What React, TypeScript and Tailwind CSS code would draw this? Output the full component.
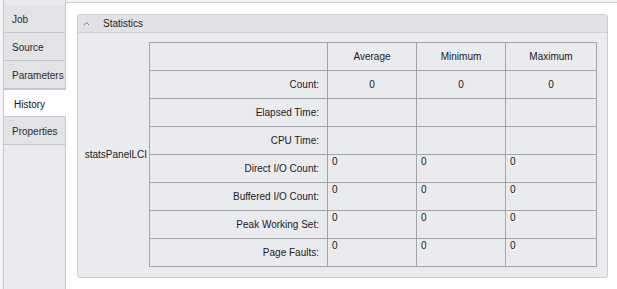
import React from "react";

const rows: { label: string; top: boolean; values: string[] }[] = [
  { label: "Count:", top: false, values: ["0", "0", "0"] },
  { label: "Elapsed Time:", top: false, values: ["", "", ""] },
  { label: "CPU Time:", top: false, values: ["", "", ""] },
  { label: "Direct I/O Count:", top: true, values: ["0", "0", "0"] },
  { label: "Buffered I/O Count:", top: true, values: ["0", "0", "0"] },
  { label: "Peak Working Set:", top: true, values: ["0", "0", "0"] },
  { label: "Page Faults:", top: true, values: ["0", "0", "0"] },
];

const tabs = ["Job", "Source", "Parameters", "History", "Properties"];

export default function App() {
  return (
    <div
      className="w-[617px] h-[289px] flex bg-[#f4f4f6] text-[#202020] overflow-hidden"
      style={{ fontFamily: '"Liberation Sans", Arial, sans-serif', fontSize: "10px" }}
    >
      {/* tab column */}
      <div className="w-[66px] h-full pl-[3px] flex">
        <div className="flex-1 h-full bg-[#eaebee] border-l border-r border-[#c6c7cb] flex flex-col pt-[5px]">
          {tabs.map((t) => {
            const sel = t === "History";
            return sel ? (
              <div
                key={t}
                className="relative z-10 -mr-px -ml-px h-[28px] bg-white border-t border-b border-l border-[#c6c7cb] flex items-center pl-[10px] pt-[2px] text-[#111]"
              >
                {t}
              </div>
            ) : (
              <div
                key={t}
                className="h-[28px] bg-[#e2e3e7] border-b border-[#c6c7cb] flex items-center pl-[8px] pt-[2px] text-[#2a2a2a]"
              >
                {t}
              </div>
            );
          })}
        </div>
      </div>

      {/* content */}
      <div className="flex-1 h-full flex flex-col">
        <div className="h-[3px] bg-[#f0f0f2] border-b border-[#cfd0d4]" />
        <div className="flex-1 bg-white pl-[11px] pr-[9px] pt-[11px] pb-[11px] flex">
          <div className="flex-1 rounded-[3px] border border-[#cbccd0] bg-[#eaebef] flex flex-col">
            <div className="h-[18px] bg-[#e1e2e6] border-b border-[#d3d4d8] rounded-t-[3px] flex items-center">
              <svg width="7" height="5" viewBox="0 0 7 5" className="ml-[5px]">
                <polyline points="1,4 3.5,1.5 6,4" fill="none" stroke="#7a7b80" strokeWidth="1" />
              </svg>
              <span className="ml-[13px] text-[#222]">Statistics</span>
            </div>
            <div className="flex pt-[9px]">
              <div className="w-[71px] flex items-center justify-end pr-[2px]">statsPanelLCI</div>
              <table className="border-collapse border border-[#a4a5a8]">
                <tbody>
                  <tr className="h-[28px]">
                    <td className="w-[178px] border border-[#a4a5a8] p-0" />
                    <td className="w-[89px] border border-[#a4a5a8] p-0 text-center">Average</td>
                    <td className="w-[89px] border border-[#a4a5a8] p-0 text-center">Minimum</td>
                    <td className="w-[91px] border border-[#a4a5a8] p-0 text-center">Maximum</td>
                  </tr>
                  {rows.map((r) => (
                    <tr key={r.label} className="h-[28px]">
                      <td className="border border-[#a4a5a8] p-0 pr-[8px] text-right align-middle">{r.label}</td>
                      {r.values.map((v, i) => (
                        <td
                          key={i}
                          className={
                            r.top
                              ? "border border-[#a4a5a8] p-0 pl-[4px] pt-[1px] align-top text-left leading-[12px]"
                              : "border border-[#a4a5a8] p-0 text-center align-middle"
                          }
                        >
                          {v}
                        </td>
                      ))}
                    </tr>
                  ))}
                </tbody>
              </table>
            </div>
          </div>
        </div>
      </div>
    </div>
  );
}
